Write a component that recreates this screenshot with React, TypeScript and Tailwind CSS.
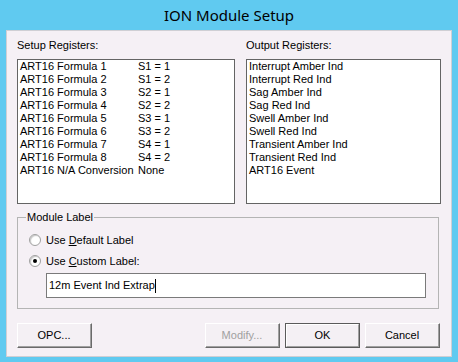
import React from "react";

const setupRows: [string, string][] = [
  ["ART16 Formula 1", "S1 = 1"],
  ["ART16 Formula 2", "S1 = 2"],
  ["ART16 Formula 3", "S2 = 1"],
  ["ART16 Formula 4", "S2 = 2"],
  ["ART16 Formula 5", "S3 = 1"],
  ["ART16 Formula 6", "S3 = 2"],
  ["ART16 Formula 7", "S4 = 1"],
  ["ART16 Formula 8", "S4 = 2"],
  ["ART16 N/A Conversion", "None"],
];

const outputRows = [
  "Interrupt Amber Ind",
  "Interrupt Red Ind",
  "Sag Amber Ind",
  "Sag Red Ind",
  "Swell Amber Ind",
  "Swell Red Ind",
  "Transient Amber Ind",
  "Transient Red Ind",
  "ART16 Event",
];

const Button = ({
  text,
  disabled,
  isDefault,
}: {
  text: string;
  disabled?: boolean;
  isDefault?: boolean;
}) => (
  <button
    disabled={disabled}
    className={`w-[75px] h-[25px] bg-[#f4f0f4] text-[11px] leading-none border ${
      isDefault
        ? "border-[#5a5a5a]"
        : "border-t-white border-l-white border-r-[#6a6a6a] border-b-[#6a6a6a]"
    } ${disabled ? "text-[#a0a0a0]" : "text-black"}`}
  >
    <div
      className={`h-full w-full flex items-center justify-center ${
        isDefault
          ? "border border-t-white border-l-white border-r-[#a0a0a0] border-b-[#a0a0a0]"
          : "border-r border-b border-r-[#a0a0a0] border-b-[#a0a0a0]"
      }`}
    >
      {text}
    </div>
  </button>
);

const Radio = ({ checked }: { checked?: boolean }) => (
  <span className="w-[12px] h-[12px] rounded-full border border-[#a0a0a0] bg-white flex items-center justify-center shrink-0 shadow-[inset_1px_1px_1px_#c8c8c8]">
    {checked && <span className="w-[4px] h-[4px] rounded-full bg-black" />}
  </span>
);

export default function App() {
  return (
    <div
      className="w-[458px] h-[362px] bg-[#60caf0] flex flex-col text-black"
      style={{ fontFamily: '"Liberation Sans", Arial, sans-serif' }}
    >
      <div
        className="h-[30px] flex items-center justify-center text-[15px] pt-[1px]"
        style={{ fontFamily: '"Noto Sans", sans-serif' }}
      >
        ION Module Setup
      </div>
      <div className="mx-[6px] h-[327px] bg-[#f5f0f5] border border-[#cfcfd4] px-[10px] flex flex-col text-[11px]">
        <div className="flex gap-[11px] mt-[8px]">
          <div className="flex flex-col">
            <p className="h-[20px] leading-[12px]">Setup Registers:</p>
            <div className="w-[218px] h-[145px] bg-white border border-[#646464] pl-[2px]">
              {setupRows.map(([a, b]) => (
                <div key={a} className="flex h-[13px] leading-[13px]">
                  <span className="w-[118px]">{a}</span>
                  <span>{b}</span>
                </div>
              ))}
            </div>
          </div>
          <div className="flex flex-col">
            <p className="h-[20px] leading-[12px]">Output Registers:</p>
            <div className="w-[195px] h-[145px] bg-white border border-[#646464] pl-[2px]">
              {outputRows.map((r) => (
                <div key={r} className="h-[13px] leading-[13px]">
                  {r}
                </div>
              ))}
            </div>
          </div>
        </div>
        <fieldset className="mt-[7px] w-[422px] h-[98px] border border-[#b4b4b4] px-[11px]">
          <legend className="ml-[-3px] px-[1px] leading-[12px]">Module Label</legend>
          <label className="flex items-center gap-[5px] mt-[10px] h-[14px]">
            <Radio />
            <span>
              Use <u>D</u>efault Label
            </span>
          </label>
          <label className="flex items-center gap-[5px] mt-[7px] h-[14px]">
            <Radio checked />
            <span>
              Use <u>C</u>ustom Label:
            </span>
          </label>
          <div className="ml-[17px] mt-[5px] w-[380px] h-[25px] bg-white border border-[#7a7a7a] flex items-center pl-[2px]">
            <span>12m Event Ind Extrap</span>
            <span className="w-[1px] h-[14px] bg-black" />
          </div>
        </fieldset>
        <div className="flex mt-[14px]">
          <Button text="OPC..." />
          <div className="flex-1" />
          <div className="flex gap-[5px] mr-[1px]">
            <Button text="Modify..." disabled />
            <Button text="OK" isDefault />
            <Button text="Cancel" />
          </div>
        </div>
      </div>
    </div>
  );
}
